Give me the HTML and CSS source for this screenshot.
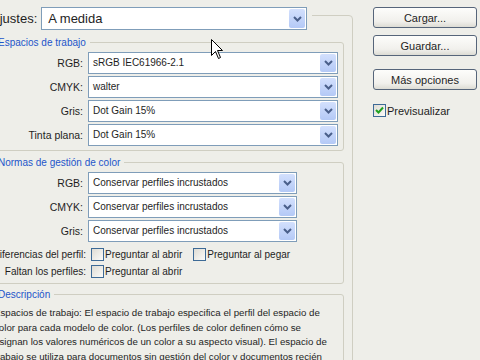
FILE: index.html
```html
<!DOCTYPE html>
<html lang="es">
<head>
  <meta charset="UTF-8">
  <title>Ajustes de color</title>
  <link rel="stylesheet" href="styles.css">
</head>
<body>

  <div class="dialog">
    <fieldset class="settings">
      <legend class="preset">
        <div class="preset-row">
          <label class="preset-label">Ajustes:</label>
          <div class="combo big">
            <span>A medida</span>
            <i class="drop"><svg width="9" height="6" viewBox="0 0 9 6"><path d="M1 1 L4.5 4.5 L8 1" fill="none" stroke="#4a5f8a" stroke-width="2"/></svg></i>
          </div>
        </div>
      </legend>

      <fieldset class="group spaces">
        <legend>Espacios de trabajo</legend>
        <div class="row"><label>RGB:</label><div class="combo"><span>sRGB IEC61966-2.1</span><i class="drop"><svg width="9" height="6" viewBox="0 0 9 6"><path d="M1 1 L4.5 4.5 L8 1" fill="none" stroke="#4a5f8a" stroke-width="2"/></svg></i></div></div>
        <div class="row"><label>CMYK:</label><div class="combo"><span>walter</span><i class="drop"><svg width="9" height="6" viewBox="0 0 9 6"><path d="M1 1 L4.5 4.5 L8 1" fill="none" stroke="#4a5f8a" stroke-width="2"/></svg></i></div></div>
        <div class="row"><label>Gris:</label><div class="combo"><span>Dot Gain 15%</span><i class="drop"><svg width="9" height="6" viewBox="0 0 9 6"><path d="M1 1 L4.5 4.5 L8 1" fill="none" stroke="#4a5f8a" stroke-width="2"/></svg></i></div></div>
        <div class="row"><label>Tinta plana:</label><div class="combo"><span>Dot Gain 15%</span><i class="drop"><svg width="9" height="6" viewBox="0 0 9 6"><path d="M1 1 L4.5 4.5 L8 1" fill="none" stroke="#4a5f8a" stroke-width="2"/></svg></i></div></div>
      </fieldset>

      <fieldset class="group policies">
        <legend>Normas de gestión de color</legend>
        <div class="row"><label>RGB:</label><div class="combo"><span>Conservar perfiles incrustados</span><i class="drop"><svg width="9" height="6" viewBox="0 0 9 6"><path d="M1 1 L4.5 4.5 L8 1" fill="none" stroke="#4a5f8a" stroke-width="2"/></svg></i></div></div>
        <div class="row"><label>CMYK:</label><div class="combo"><span>Conservar perfiles incrustados</span><i class="drop"><svg width="9" height="6" viewBox="0 0 9 6"><path d="M1 1 L4.5 4.5 L8 1" fill="none" stroke="#4a5f8a" stroke-width="2"/></svg></i></div></div>
        <div class="row"><label>Gris:</label><div class="combo"><span>Conservar perfiles incrustados</span><i class="drop"><svg width="9" height="6" viewBox="0 0 9 6"><path d="M1 1 L4.5 4.5 L8 1" fill="none" stroke="#4a5f8a" stroke-width="2"/></svg></i></div></div>
        <div class="row checks first"><label>Diferencias del perfil:</label>
          <div class="check-group">
            <span class="check"><i class="box"></i>Preguntar al abrir</span>
            <span class="check"><i class="box"></i>Preguntar al pegar</span>
          </div>
        </div>
        <div class="row checks"><label>Faltan los perfiles:</label>
          <div class="check-group">
            <span class="check"><i class="box"></i>Preguntar al abrir</span>
          </div>
        </div>
      </fieldset>

      <fieldset class="group description">
        <legend>Descripción</legend>
        <p>Espacios de trabajo: El espacio de trabajo especifica el perfil del espacio de color para cada modelo de color. (Los perfiles de color definen cómo se asignan los valores numéricos de un color a su aspecto visual). El espacio de trabajo se utiliza para documentos sin gestión del color y documentos recién creados con gestión del color.</p>
      </fieldset>
    </fieldset>

    <div class="actions">
      <button class="btn">Cargar...</button>
      <button class="btn">Guardar...</button>
      <button class="btn more">Más opciones</button>
      <span class="check preview"><i class="box checked"><svg width="9" height="9" viewBox="0 0 9 9"><path d="M1 4 L3.5 6.5 L8 1.5" fill="none" stroke="#21a121" stroke-width="2"/></svg></i>Previsualizar</span>
    </div>
  </div>

  <!-- mouse pointer over the dialog -->
  <svg class="cursor" width="13" height="21" viewBox="0 0 13 21">
    <path d="M0.5 0.5 L0.5 16.5 L4.5 12.5 L7.5 19.5 L9.5 18.5 L6.5 11.5 L11.5 11.5 Z" fill="#fff" stroke="#000" stroke-width="1"/>
  </svg>

</body>
</html>
```

FILE: styles.css
```css
body {
  margin: 0;
  width: 480px;
  height: 360px;
  overflow: hidden;
  position: relative;
  background-color: #eeeee9;
  color: #1e1e1e;
  font-family: "Liberation Sans", Arial, sans-serif;
  font-size: 10px;
}

.dialog {
  display: flex;
  margin-left: -14px;
}

/* outer group: its legend is the preset row */
.settings {
  width: 367px;
  min-width: 0;
  box-sizing: border-box;
  margin: 1px 0 0;
  padding: 0 8px 0 4px;
  border: 1px solid #cfcec2;
  border-radius: 4px;
}

.preset {
  padding: 6px 5px 0 0;
}

.preset-row {
  display: flex;
  align-items: center;
}

.preset-label {
  font-size: 13px;
  margin-right: 4px;
}

/* combo boxes */
.combo {
  display: flex;
  align-items: stretch;
  height: 22px;
  box-sizing: border-box;
  padding: 1px;
  background-color: #fff;
  border: 1px solid #7f9db9;
}

.combo span {
  flex: 1;
  padding-left: 3px;
  line-height: 18px;
  white-space: nowrap;
  overflow: hidden;
}

.combo.big {
  width: 266px;
  height: 23px;
}

.combo.big span {
  font-size: 13px;
  line-height: 19px;
  padding-left: 5px;
}

.drop {
  width: 16px;
  display: flex;
  align-items: center;
  justify-content: center;
  background: linear-gradient(#d3e0fd, #b4c9f6);
  border-radius: 2px;
}

/* group boxes */
.group {
  margin: 6px 0 0;
  padding: 3px 0 4px 2px;
  border: 1px solid #cfcec2;
  border-radius: 3px;
}

.group legend {
  color: #1d55c9;
  font-size: 10px;
  line-height: 13px;
  padding: 0 4px;
}

.policies {
  margin-top: 5px;
  padding-bottom: 3px;
}

.description {
  margin-top: 4px;
  padding-top: 5px;
}

.row {
  display: grid;
  grid-template-columns: 89px auto;
  column-gap: 5px;
  align-items: center;
  height: 22px;
  margin-bottom: 2px;
}

.row label {
  justify-self: end;
  font-size: 10.5px;
  white-space: nowrap;
}

.row.checks label {
  font-size: 10px;
  margin-right: -3px;
}

.spaces .combo {
  width: 250px;
}

.policies .combo {
  width: 209px;
}

.spaces .row:last-child {
  margin-bottom: 0;
}

.row.checks {
  height: 17px;
  margin-bottom: 0;
}

.row.checks.first {
  margin-top: 4px;
}

.check-group {
  display: flex;
  gap: 11px;
  margin-left: 3px;
}

.check {
  display: inline-flex;
  align-items: center;
  gap: 1px;
  white-space: nowrap;
}

.box {
  width: 13px;
  height: 13px;
  box-sizing: border-box;
  border: 1px solid #3d6a96;
  background: linear-gradient(135deg, #dedcd4, #fbfbf9);
  display: flex;
  align-items: center;
  justify-content: center;
}

.description p {
  margin: 0;
  width: 333px;
  font-size: 9.7px;
  line-height: 14.6px;
}

/* right column */
.actions {
  width: 104px;
  margin-left: 20px;
  padding-top: 7px;
  display: flex;
  flex-direction: column;
}

.btn {
  height: 21px;
  margin-bottom: 7px;
  padding: 0;
  font-family: "Liberation Sans", Arial, sans-serif;
  font-size: 11px;
  color: #1e1e1e;
  background: linear-gradient(#fdfdfb, #f1f0ec 70%, #dddcd4);
  border: 1px solid #56657a;
  border-radius: 3px;
}

.btn.more {
  margin-top: 6px;
}

.preview {
  margin-top: 7px;
  font-size: 11px;
}

.cursor {
  position: absolute;
  left: 211px;
  top: 39px;
}
```
